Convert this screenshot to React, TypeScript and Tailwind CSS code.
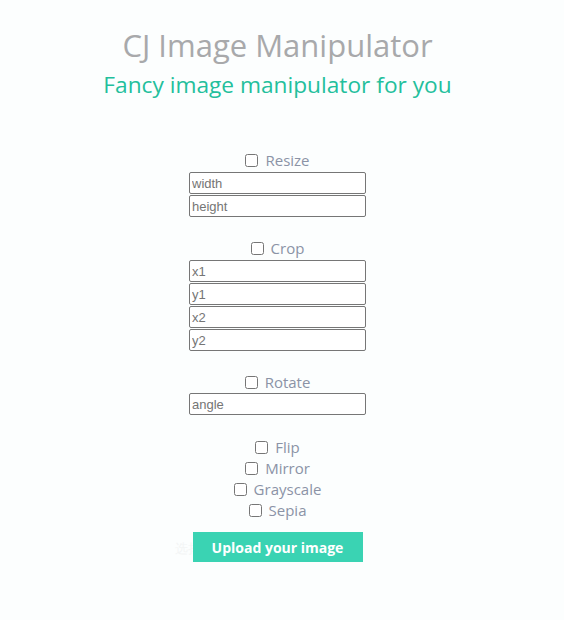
import React from 'react'

const font = { fontFamily: '"Open Sans", "Noto Sans", sans-serif' }

function Field({ placeholder }: { placeholder: string }) {
  return (
    <input
      placeholder={placeholder}
      className="block w-[177px] h-[22px] px-[2px] border border-[#767676] rounded-[2px] bg-white text-[13px] text-[#333] placeholder:text-[#757575] outline-none"
      style={{ fontFamily: '"Liberation Sans", Arial, sans-serif' }}
    />
  )
}

function Check({ label }: { label: string }) {
  return (
    <label className="h-[21px] flex items-center justify-center text-[15px] text-[#8b93a6] leading-[21px]">
      <input type="checkbox" className="block w-[13px] h-[13px] m-0 mr-[7px]" />
      {label}
    </label>
  )
}

export default function App() {
  return (
    <div className="w-full min-h-[620px] bg-[#fcfefe]" style={font}>
      <div className="w-[555px] flex flex-col items-center pt-[24px]">
        <h1 className="text-[31px] leading-[42px] text-[#a8a9ab] font-normal">CJ Image Manipulator</h1>
        <h2 className="text-[22.7px] leading-[32px] text-[#23bf9c] font-normal mt-[3px]">Fancy image manipulator for you</h2>

        <div className="flex flex-col items-center mt-[49px]">
          <Check label="Resize" />
          <div className="flex flex-col gap-[1px] mt-[1px]">
            <Field placeholder="width" />
            <Field placeholder="height" />
          </div>

          <div className="mt-[21px] flex flex-col"><Check label="Crop" /></div>
          <div className="flex flex-col gap-[1px] mt-[1px]">
            <Field placeholder="x1" />
            <Field placeholder="y1" />
            <Field placeholder="x2" />
            <Field placeholder="y2" />
          </div>

          <div className="mt-[21px] flex flex-col"><Check label="Rotate" /></div>
          <div className="flex flex-col">
            <Field placeholder="angle" />
          </div>

          <div className="mt-[22px] flex flex-col items-center">
            <Check label="Flip" />
            <Check label="Mirror" />
            <Check label="Grayscale" />
            <Check label="Sepia" />
          </div>

          <div className="relative flex mt-[11px]">
            <span className="absolute left-[-18px] top-[7px] text-[13px] text-[#f3f5f5]">选择文件</span>
            <button
              className="relative w-[170px] h-[30px] bg-[#3ad3b3] text-white text-[14px] font-bold"
              style={{ fontFamily: '"Open Sans", sans-serif' }}
            >
              Upload your image
            </button>
          </div>
        </div>
      </div>
    </div>
  )
}
